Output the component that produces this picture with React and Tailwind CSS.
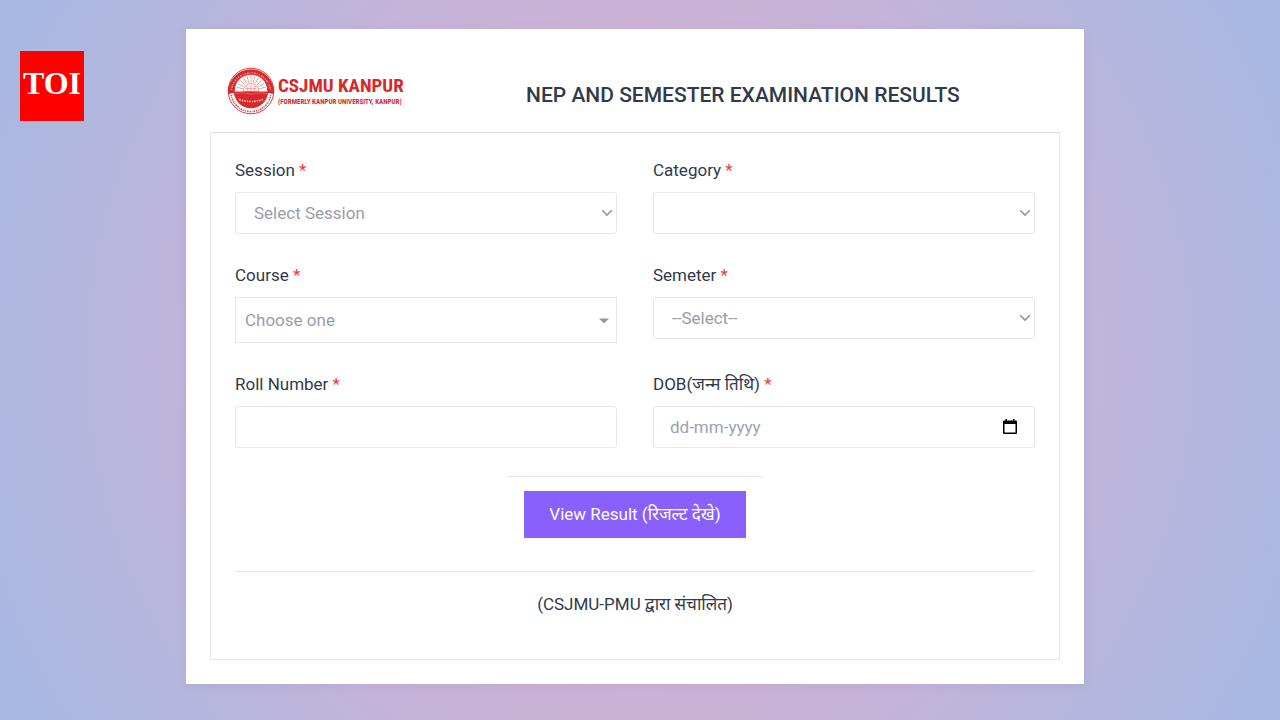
import React, { useState } from 'react';

const controlClass =
  'w-full h-[42px] appearance-none rounded-[3px] border border-[#e6e7ec] bg-white text-[17px] text-[#9a9ca8] outline-none focus:border-[#8a60fd]';

const rays = [-75, -60, -45, -30, -15, 0, 15, 30, 45, 60, 75];

const Emblem = () => (
  <svg viewBox="0 0 48 48" className="w-12 h-12 shrink-0" aria-hidden="true">
    <circle cx="24" cy="24" r="22.8" fill="#fff" stroke="#d9282b" strokeWidth="0.9" />
    <path d="M1 27a23 23 0 0 1 46 0l-6-1a17 17 0 0 0-34 0z" fill="#d9282b" />
    <path d="M1.200 25a22.800 22.800 0 0 1 45.600 0h-5.600a17.200 17.200 0 0 0-34.400 0z" fill="#d9282b" />
    <path d="M4.400 23a19.800 19.800 0 0 1 39.200 0" fill="none" stroke="#ee9c98" strokeWidth="1.300" strokeDasharray="1.300 1 2 .8 .9 1.200" />
    <path d="M4.200 28a20.100 20.100 0 0 0 39.600 0" fill="none" stroke="#df5553" strokeWidth="1.700" strokeDasharray="1.400 .8 .8 .9 1.900 .8" />
    <circle cx="24" cy="24" r="16.8" fill="#fff" stroke="#d9282b" strokeWidth="1" />
    <g stroke="#e8908d" strokeWidth="0.8">
      {rays.map((angle) => (
        <path key={angle} d="M24 15.500V9" transform={`rotate(${angle} 24 24)`} />
      ))}
    </g>
    <path d="M16 24.500a8 8 0 0 1 16 0z" fill="#fdf1f0" stroke="#e8827f" strokeWidth="0.7" />
    <path d="M24 24v-6M21 24l-1.500-5M27 24l1.500-5M18.500 21.500h11" stroke="#e8938f" strokeWidth="0.7" />
    <path d="M7.500 24.500h33a16.500 16.500 0 0 1-33 0z" fill="#d9282b" />
    <path d="M8 26.500c5.500-.8 11-.8 16 .8 5-1.600 10.500-1.600 16-.8" fill="none" stroke="#ea7e7b" strokeWidth="0.6" />
    <path d="M12 32.500q12 4 24 0" fill="none" stroke="#f6c2be" strokeWidth="1.600" strokeDasharray="2 1 1.200 .8" />
  </svg>
);

const Chevron = () => (
  <svg viewBox="0 0 12 8" className="absolute right-1 top-[17px] w-3 h-2 pointer-events-none" aria-hidden="true">
    <path d="M1.200 1.300 6 6.100l4.800-4.800" fill="none" stroke="#94969c" strokeWidth="1.600" />
  </svg>
);

const Field = ({ id, label, children }) => (
  <div>
    <label htmlFor={id} className="block h-6 mb-2.5 text-[17px] leading-6 text-[#2f3a4a]">
      {label} <span className="text-[#f5383e]">*</span>
    </label>
    <div className="relative">{children}</div>
  </div>
);

const App = () => {
  const [rollNumber, setRollNumber] = useState('');
  const [dob, setDob] = useState('');

  return (
    <div className="relative min-h-screen pt-[29px] pb-9 pl-6 pr-[34px] font-[Roboto,'Noto_Sans_Devanagari',sans-serif] bg-[radial-gradient(circle_at_center,#eeaeca_0%,#94bbe9_122%)]">
      <div className="absolute left-5 top-[51px] w-16 h-[70px] bg-[#ff0000] text-white text-center font-['Liberation_Serif',serif] font-bold text-[32px] leading-[64px]">
        TOI
      </div>

      <main className="mx-auto w-full max-w-[898px] bg-white p-6 shadow-[0_2px_10px_rgba(90,80,140,0.1)]">
        <header className="flex items-center h-[79px] pl-[17px] pb-1">
          <div className="flex items-center gap-[3px] w-[299px] text-[#d9282b] font-bold font-['Roboto_Condensed','Liberation_Sans_Narrow',sans-serif] whitespace-nowrap">
            <Emblem />
            <div>
              <div className="text-[19px] leading-[22px]">CSJMU KANPUR</div>
              <div className="text-[7px] leading-[10px]">(FORMERLY KANPUR UNIVERSITY, KANPUR)</div>
            </div>
          </div>
          <h1 className="pt-2 text-[21px] leading-7 font-medium text-[#2f3a4a]">NEP AND SEMESTER EXAMINATION RESULTS</h1>
        </header>

        <form className="border border-[#e6e7ec] border-t-[#dcdde2] px-6 pt-[25px] pb-[43px]" onSubmit={(e) => e.preventDefault()}>
          <div className="grid grid-cols-2 gap-x-9 gap-y-[29px]">
            <Field id="session" label="Session">
              <select id="session" className={`${controlClass} px-[18px] pt-0.5`}>
                <option>Select Session</option>
              </select>
              <Chevron />
            </Field>
            <Field id="category" label="Category">
              <select id="category" className={`${controlClass} px-[18px] pt-0.5`}>
                <option></option>
              </select>
              <Chevron />
            </Field>
            <Field id="course" label="Course">
              <select
                id="course"
                className="w-full h-[46px] appearance-none border border-[#e6e7ec] bg-white px-[9px] pt-0.5 text-[17px] text-[#9a9ca8] outline-none"
              >
                <option>Choose one</option>
              </select>
              <svg viewBox="0 0 10 6" className="absolute right-2 top-[21px] w-2.5 h-1.5 pointer-events-none" aria-hidden="true">
                <path d="M0 .5h10L5 5.500z" fill="#94969c" />
              </svg>
            </Field>
            <Field id="semester" label="Semeter">
              <select id="semester" className={`${controlClass} px-[18px] pt-0.5`}>
                <option>--Select--</option>
              </select>
              <Chevron />
            </Field>
            <Field id="roll" label="Roll Number">
              <input
                id="roll"
                type="text"
                value={rollNumber}
                onChange={(e) => setRollNumber(e.target.value)}
                className={`${controlClass} px-4`}
              />
            </Field>
            <Field id="dob" label="DOB(जन्म तिथि)">
              <input
                id="dob"
                type="text"
                placeholder="dd-mm-yyyy"
                value={dob}
                onChange={(e) => setDob(e.target.value)}
                className={`${controlClass} px-4 placeholder:text-[#9aa3b2]`}
              />
              <button type="button" aria-label="Open calendar" className="absolute right-[18px] top-[13px]">
                <svg viewBox="0 0 14 15" className="w-[14px] h-[15px]" aria-hidden="true">
                  <path d="M2.500 0H4v1.500h6V0h1.500v1.500H13a1 1 0 0 1 1 1V14a1 1 0 0 1-1 1H1a1 1 0 0 1-1-1V2.500a1 1 0 0 1 1-1h1.500zM1.500 5v8.500h11V5z" fill="#000" fillRule="evenodd" />
                </svg>
              </button>
            </Field>
          </div>

          <hr className="mx-auto mt-7 w-[257px] border-[#e6e7ec]" />
          <button
            type="submit"
            className="block mx-auto mt-3.5 h-[47px] min-w-[222px] px-6 pb-0.5 bg-[#8a60fd] text-[17px] leading-6 text-white"
          >
            View Result (रिजल्ट देखे)
          </button>

          <hr className="mt-[33px] border-[#e6e7ec]" />
          <p className="mt-5 text-center text-[17px] leading-6 text-[#2f3a4a]">(CSJMU-PMU द्वारा संचालित)</p>
        </form>
      </main>
    </div>
  );
};

export default App;
